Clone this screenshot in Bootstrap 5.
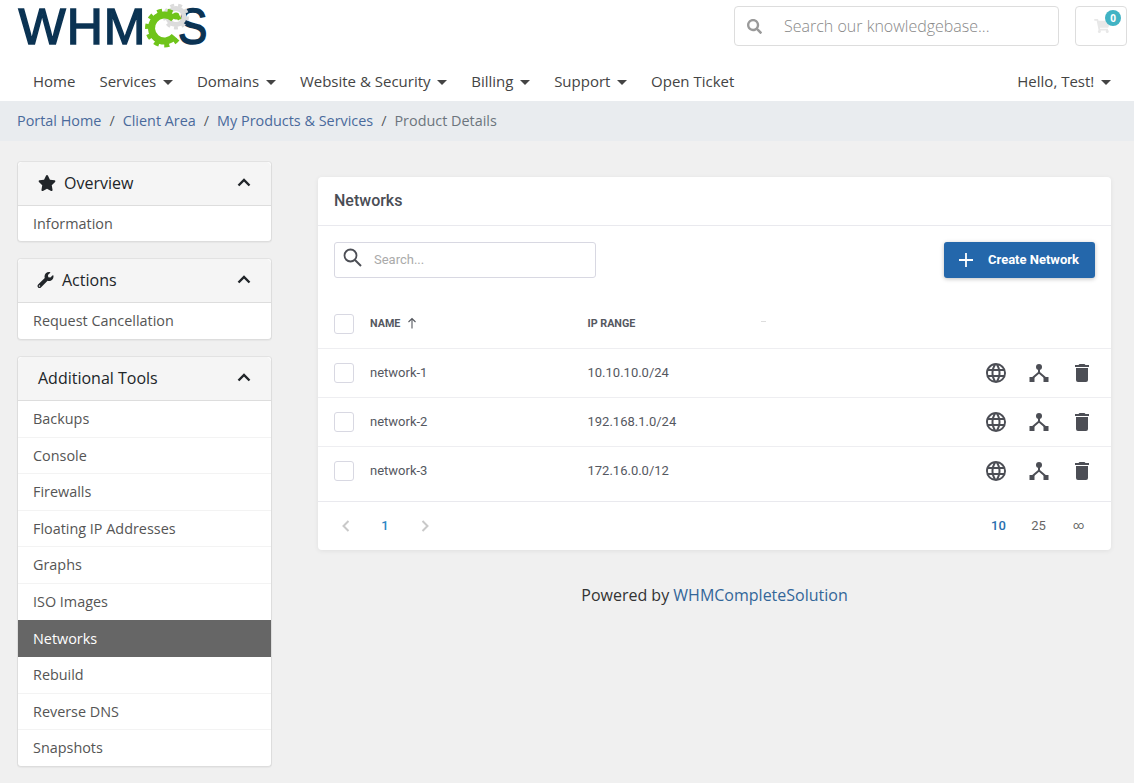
<!doctype html>
<html lang="en">
<head>
<meta charset="utf-8">
<title>Networks</title>
<link rel="stylesheet" href="https://cdn.jsdelivr.net/npm/bootstrap@5.3.0/dist/css/bootstrap.min.css">
<style>
html,body{height:100%}
body{background:#f0f0f0;font-family:"Open Sans","Liberation Sans",sans-serif;font-size:14.4px;color:#333;overflow:hidden}
a{text-decoration:none}
.top-head{background:#fff;height:101px}
.top-bar{height:61px;padding:6px 7px 0 18.5px}
.brand-logo{position:relative;display:block;width:190px;height:40px;margin-top:-1px;color:#0b3353;font:400 50px/44px "Liberation Sans",sans-serif;-webkit-text-stroke:1.5px #0b3353;letter-spacing:1px;white-space:nowrap}
.brand-s{position:absolute;left:159px;top:0;display:inline-block;transform:scaleX(.88);transform-origin:left center}
.brand-gear{position:absolute;left:120px;top:-5px;width:72px;height:50px;overflow:visible}
.kb-search{width:325px;height:40px;border:1px solid #ddd;border-radius:4px;padding-left:12px}
.kb-search svg{width:15px;height:15px;fill:#9a9a9a;flex:none}
.kb-search input{border:0;outline:0;padding:0;margin-left:22px;flex:1;min-width:0;font:300 16px "Open Sans",sans-serif;background:transparent}
.kb-search input::placeholder{color:#888;opacity:1}
.cart-btn{position:relative;width:52px;height:40px;border:1px solid #ddd;border-radius:4px;margin-left:16px}
.cart-btn svg{position:absolute;left:18px;top:12px;width:16px;height:14px;fill:#e8e8e8}
.cart-count{position:absolute;right:5px;top:3px;width:16px;height:16px;border-radius:50%;background:#41b3c4;color:#fff;font-size:10px;font-weight:700;line-height:16px;text-align:center}
.main-nav{padding:0 11px 0 21px;height:40px}
.main-nav .nav-link{color:#444;font-size:15px;padding:0 12px;line-height:40px}
.main-nav .dropdown-toggle::after{margin-left:6.7px;vertical-align:2px;border-top-width:5px;border-left-width:5px;border-right-width:5px}
.crumbs{background:#e9ecef;height:40px;padding:0 17px;font-size:14.4px;margin:0}
.crumbs .breadcrumb-item{line-height:40px}
.crumbs a{color:#4a6a9c}
.crumbs .active{color:#6c757d}
.page-wrap{padding:19.8px 23px 0 17px}
.side-col{width:255px;flex:none}
.main-col{width:793px;flex:none;margin-left:46px;padding-top:16.2px}
.side-card{margin-bottom:16px;border-color:#ddd;border-radius:4px;border-top-color:#e2e2e2;box-shadow:0 1px 1px rgba(0,0,0,.04)}
.side-card .card-header{background:#f5f5f5;border-color:#ddd;height:44px;padding:0 20px 1px;font-size:16px;color:#212529}
.side-card .card-header svg.lead-ico{width:18px;height:16px;fill:#212529;margin-right:8px}
.side-card .card-header svg.wrench-ico{width:17px;margin-left:-1px}
.chev{width:14px;height:10px;margin-left:auto;margin-top:-2px}
.side-card .list-group-item{padding:0 15px;height:36.6px;line-height:36.8px;color:#555;border-color:#f3f3f3;font-size:14.4px}
.side-card .list-group-item:last-child{height:35.6px}
.side-card .list-group-item.active{background:#666;border-color:#666;color:#fff;font-weight:500;margin-top:-1px;height:37.6px;line-height:36px}
.net-card{border:0;border-radius:4px;box-shadow:0 1px 5px rgba(0,0,0,.07);font-family:Roboto,sans-serif;height:373px}
.net-head{height:49px;padding:0 16px;font-size:16px;font-weight:500;color:#4a4d55;border-bottom:1px solid #e9e9ee}
.net-tools{padding:16px 16px 0}
.net-search{width:262px;height:36px;border:1px solid #d8d8e2;border-radius:3px;padding-left:8px;background:#fff}
.net-search svg{width:19px;height:19px;flex:none;margin-top:-4px}
.net-search input{border:0;outline:0;margin-left:12px;font:400 13px Roboto,sans-serif;flex:1;min-width:0;padding:0}
.net-search input::placeholder{color:#aaa;opacity:1}
.create-btn{width:151px;height:36px;background:#2467ab;border:0;border-radius:3px;color:#fff;font-size:13px;font-weight:700;box-shadow:0 1px 4px rgba(0,0,0,.25);padding:0 0 0 14px}
.create-btn:hover{background:#2467ab;color:#fff}
.create-btn svg{width:16px;height:16px;margin-right:14px}
.net-table{margin:20px 0 0;table-layout:fixed;width:100%;font-size:13px;color:#55585f}
.net-table th,.net-table td{padding:0;border-bottom:1px solid #eeeef1;vertical-align:middle;color:#55585f;background:transparent}
.net-table thead th{height:51px;font-size:10.75px;font-weight:700;text-transform:uppercase;padding-top:2px}
.net-table tbody td{height:49px}
.net-table tbody td.cell-text{padding-bottom:1px}
.net-table tbody tr:last-child td{height:55px;padding-bottom:6px;border-bottom-color:#e9e9ee}
.net-table tbody tr:last-child td.cell-text{padding-bottom:7px}
.col-check{width:52px;padding-left:16px !important}
.col-name{width:217.5px}
.col-act{width:150px}
.tick-box{display:block;width:20px;height:20px;border:1px solid #d8d8e2;border-radius:3px;background:#fff}
.sort-up{width:10px;height:12px;margin-left:7px;vertical-align:-2px}
.faint-mark{display:inline-block;width:5px;height:1px;background:#ddd;margin:0 0 5px 126px}
.act-icons{gap:19px;padding-right:17px;justify-content:flex-end}
.act-icons svg{width:24px;height:24px;fill:#4c4e55}
.net-foot{height:48px;padding:0 27px 0 21px;font-size:13px;color:#666}
.pager-num{color:#2b86c5;font-weight:500;width:14px;text-align:center}
.pager-chev{width:14px;height:14px;fill:none;stroke:#c9c9c9;stroke-width:2}
.pager-gap-a{margin:0 26px 0 25px}
.per-page{gap:25.4px}
.per-page .cur{color:#2a6fae;font-weight:500}
.per-page span:last-child{font-size:11px;margin:0 0 0 1.5px}
.power-line{text-align:center;font-size:16px;color:#333;margin-top:33px;line-height:24px}
.power-line a{color:#336699}
</style>
</head>
<body>
<header class="top-head">
  <div class="top-bar d-flex align-items-start">
    <a class="brand-logo" href="#">WHM<span class="brand-s">S</span>
      <svg class="brand-gear" viewBox="0 0 72 50" aria-hidden="true">
        <circle cx="37" cy="16.5" r="8" fill="none" stroke="#dcdcdc" stroke-width="5"/>
        <circle cx="37" cy="16.5" r="11.5" fill="none" stroke="#dcdcdc" stroke-width="3" stroke-dasharray="4 4"/>
        <g fill="none" stroke="#6fc41a" transform="rotate(40 25.5 28)">
          <circle cx="25.5" cy="28" r="13" stroke-width="7" stroke-dasharray="62 20"/>
          <circle cx="25.5" cy="28" r="17.5" stroke-width="4" stroke-dasharray="5 5.4 5 5.4 5 5.4 5 5.4 5 5.4 5 5.4 5 5.4 5 5.4 5 29"/>
        </g>
        <circle cx="37" cy="16" r="3.4" fill="#6fc41a" stroke="none"/>
      </svg>
    </a>
    <form class="kb-search d-flex align-items-center ms-auto mb-0">
      <svg viewBox="0 0 512 512"><path d="M505 442.7L405.3 343c-4.5-4.5-10.6-7-17-7H372c27.6-35.3 44-79.7 44-128C416 93.1 322.9 0 208 0S0 93.1 0 208s93.1 208 208 208c48.3 0 92.7-16.4 128-44v16.3c0 6.4 2.5 12.5 7 17l99.7 99.7c9.4 9.4 24.6 9.4 33.9 0l28.3-28.3c9.4-9.4 9.4-24.6.1-34zM208 336c-70.7 0-128-57.2-128-128 0-70.7 57.2-128 128-128 70.7 0 128 57.2 128 128 0 70.7-57.2 128-128 128z"/></svg>
      <input type="text" placeholder="Search our knowledgebase...">
    </form>
    <a class="cart-btn" href="#">
      <svg viewBox="0 0 576 512"><path d="M528.12 301.319l47.273-208C578.806 78.301 567.391 64 551.99 64H159.208l-9.166-44.81C147.758 8.021 137.93 0 126.529 0H24C10.745 0 0 10.745 0 24v16c0 13.255 10.745 24 24 24h69.883l70.248 343.435C147.325 417.1 136 435.222 136 456c0 30.928 25.072 56 56 56s56-25.072 56-56c0-15.674-6.447-29.835-16.824-40h209.647C430.447 426.165 424 440.326 424 456c0 30.928 25.072 56 56 56s56-25.072 56-56c0-22.172-12.888-41.332-31.579-50.405l5.517-24.276c3.413-15.018-8.002-29.319-23.403-29.319H218.117l-6.545-32h293.145c11.206 0 20.92-7.754 23.403-18.681z"/></svg>
      <span class="cart-count">0</span>
    </a>
  </div>
  <nav class="main-nav d-flex">
    <ul class="nav">
      <li class="nav-item"><a class="nav-link" href="#">Home</a></li>
      <li class="nav-item"><a class="nav-link dropdown-toggle" href="#">Services</a></li>
      <li class="nav-item"><a class="nav-link dropdown-toggle" href="#">Domains</a></li>
      <li class="nav-item"><a class="nav-link dropdown-toggle" href="#">Website &amp; Security</a></li>
      <li class="nav-item"><a class="nav-link dropdown-toggle" href="#">Billing</a></li>
      <li class="nav-item"><a class="nav-link dropdown-toggle" href="#">Support</a></li>
      <li class="nav-item"><a class="nav-link" href="#">Open Ticket</a></li>
    </ul>
    <ul class="nav ms-auto">
      <li class="nav-item"><a class="nav-link dropdown-toggle" href="#">Hello, Test!</a></li>
    </ul>
  </nav>
</header>
<ol class="breadcrumb crumbs">
  <li class="breadcrumb-item"><a href="#">Portal Home</a></li>
  <li class="breadcrumb-item"><a href="#">Client Area</a></li>
  <li class="breadcrumb-item"><a href="#">My Products &amp; Services</a></li>
  <li class="breadcrumb-item active">Product Details</li>
</ol>
<div class="page-wrap d-flex align-items-start">
  <aside class="side-col">
    <div class="card side-card">
      <div class="card-header d-flex align-items-center">
        <svg class="lead-ico" viewBox="0 0 576 512"><path d="M259.3 17.8L194 150.2 47.9 171.5c-26.2 3.8-36.7 36.1-17.7 54.6l105.7 103-25 145.5c-4.5 26.3 23.2 46 46.4 33.7L288 439.6l130.7 68.7c23.2 12.2 50.9-7.4 46.4-33.7l-25-145.5 105.7-103c19-18.5 8.5-50.8-17.7-54.6L382 150.2 316.7 17.8c-11.7-23.6-45.6-23.9-57.4 0z"/></svg>
        Overview
        <svg class="chev" viewBox="0 0 14 10"><path d="M1.5 8.5L7 3l5.500 5.500" fill="none" stroke="#212529" stroke-width="2.400"/></svg>
      </div>
      <div class="list-group list-group-flush">
        <a class="list-group-item" href="#">Information</a>
      </div>
    </div>
    <div class="card side-card">
      <div class="card-header d-flex align-items-center">
        <svg class="lead-ico wrench-ico" viewBox="0 0 512 512"><path d="M507.73 109.1c-2.24-9.03-13.54-12.09-20.12-5.51l-74.36 74.36-67.88-11.31-11.31-67.88 74.36-74.36c6.62-6.62 3.43-17.9-5.66-20.16-47.38-11.74-99.55.91-136.58 37.93-39.64 39.64-50.55 97.1-34.05 147.2L18.74 402.76c-24.99 24.99-24.99 65.51 0 90.5 24.99 24.99 65.51 24.99 90.5 0l213.21-213.21c50.12 16.71 107.47 5.68 147.37-34.22 37.07-37.07 49.7-89.32 37.91-136.73zM64 472c-13.25 0-24-10.75-24-24 0-13.26 10.75-24 24-24s24 10.74 24 24c0 13.25-10.75 24-24 24z"/></svg>
        Actions
        <svg class="chev" viewBox="0 0 14 10"><path d="M1.5 8.5L7 3l5.500 5.500" fill="none" stroke="#212529" stroke-width="2.400"/></svg>
      </div>
      <div class="list-group list-group-flush">
        <a class="list-group-item" href="#">Request Cancellation</a>
      </div>
    </div>
    <div class="card side-card">
      <div class="card-header d-flex align-items-center">
        Additional Tools
        <svg class="chev" viewBox="0 0 14 10"><path d="M1.5 8.5L7 3l5.500 5.500" fill="none" stroke="#212529" stroke-width="2.400"/></svg>
      </div>
      <div class="list-group list-group-flush">
        <a class="list-group-item" href="#">Backups</a>
        <a class="list-group-item" href="#">Console</a>
        <a class="list-group-item" href="#">Firewalls</a>
        <a class="list-group-item" href="#">Floating IP Addresses</a>
        <a class="list-group-item" href="#">Graphs</a>
        <a class="list-group-item" href="#">ISO Images</a>
        <a class="list-group-item active" href="#">Networks</a>
        <a class="list-group-item" href="#">Rebuild</a>
        <a class="list-group-item" href="#">Reverse DNS</a>
        <a class="list-group-item" href="#">Snapshots</a>
      </div>
    </div>
  </aside>
  <main class="main-col">
    <section class="card net-card">
      <div class="net-head d-flex align-items-center">Networks</div>
      <div class="net-tools d-flex justify-content-between">
        <div class="net-search d-flex align-items-center">
          <svg viewBox="0 0 19 19"><circle cx="7.500" cy="7.500" r="6" fill="none" stroke="#4c4e55" stroke-width="1.800"/><path d="M12 12l6 6" stroke="#4c4e55" stroke-width="2"/></svg>
          <input type="text" placeholder="Search...">
        </div>
        <button class="btn create-btn d-flex align-items-center" type="button">
          <svg viewBox="0 0 16 16"><path d="M8 1v14M1 8h14" stroke="#fff" stroke-width="1.800"/></svg>
          Create Network
        </button>
      </div>
      <table class="table net-table">
        <thead>
          <tr>
            <th class="col-check"><span class="tick-box"></span></th>
            <th class="col-name">Name<svg class="sort-up" viewBox="0 0 10 12"><path d="M5 11.500V1.500M1.500 5L5 1.500 8.500 5" fill="none" stroke="#55585f" stroke-width="1.100"/></svg></th>
            <th>IP Range<span class="faint-mark"></span></th>
            <th class="col-act"></th>
          </tr>
        </thead>
        <tbody>
          <tr>
            <td class="col-check"><span class="tick-box"></span></td>
            <td class="cell-text">network-1</td>
            <td class="cell-text">10.10.10.0/24</td>
            <td><div class="act-icons d-flex">
              <svg viewBox="0 0 24 24"><path d="M16.36,14C16.44,13.34 16.5,12.68 16.5,12C16.5,11.32 16.44,10.66 16.36,10H19.74C19.9,10.64 20,11.31 20,12C20,12.69 19.9,13.36 19.74,14M14.59,19.56C15.19,18.45 15.65,17.25 15.97,16H18.92C17.96,17.65 16.43,18.93 14.59,19.56M14.34,14H9.66C9.56,13.34 9.5,12.68 9.5,12C9.5,11.32 9.56,10.65 9.66,10H14.34C14.43,10.65 14.5,11.32 14.5,12C14.5,12.68 14.43,13.34 14.34,14M12,19.96C11.17,18.76 10.5,17.43 10.09,16H13.91C13.5,17.43 12.83,18.76 12,19.96M8,8H5.08C6.03,6.34 7.57,5.06 9.4,4.44C8.8,5.55 8.35,6.75 8,8M5.08,16H8C8.35,17.25 8.8,18.45 9.4,19.56C7.57,18.93 6.03,17.65 5.08,16M4.26,14C4.1,13.36 4,12.69 4,12C4,11.31 4.1,10.64 4.26,10H7.64C7.56,10.66 7.5,11.32 7.5,12C7.5,12.68 7.56,13.34 7.64,14M12,4.03C12.83,5.23 13.5,6.57 13.91,8H10.09C10.5,6.57 11.17,5.23 12,4.03M18.92,8H15.97C15.65,6.75 15.19,5.55 14.59,4.44C16.43,5.07 17.96,6.34 18.92,8M12,2C6.47,2 2,6.5 2,12A10,10 0 0,0 12,22A10,10 0 0,0 22,12A10,10 0 0,0 12,2Z"/></svg>
              <svg viewBox="0 0 24 24"><circle cx="12" cy="6" r="3"/><path d="M2.500 16h5v5h-5zM16.500 16h5v5h-5z"/><path d="M12 7v5M12 11.500L5 17.500M12 11.500L19 17.500" fill="none" stroke="#4c4e55" stroke-width="2"/></svg>
              <svg viewBox="0 0 24 24"><path d="M19,4H15.5L14.5,3H9.5L8.5,4H5V6H19M6,19A2,2 0 0,0 8,21H16A2,2 0 0,0 18,19V7H6V19Z"/></svg>
            </div></td>
          </tr>
          <tr>
            <td class="col-check"><span class="tick-box"></span></td>
            <td class="cell-text">network-2</td>
            <td class="cell-text">192.168.1.0/24</td>
            <td><div class="act-icons d-flex">
              <svg viewBox="0 0 24 24"><path d="M16.36,14C16.44,13.34 16.5,12.68 16.5,12C16.5,11.32 16.44,10.66 16.36,10H19.74C19.9,10.64 20,11.31 20,12C20,12.69 19.9,13.36 19.74,14M14.59,19.56C15.19,18.45 15.65,17.25 15.97,16H18.92C17.96,17.65 16.43,18.93 14.59,19.56M14.34,14H9.66C9.56,13.34 9.5,12.68 9.5,12C9.5,11.32 9.56,10.65 9.66,10H14.34C14.43,10.65 14.5,11.32 14.5,12C14.5,12.68 14.43,13.34 14.34,14M12,19.96C11.17,18.76 10.5,17.43 10.09,16H13.91C13.5,17.43 12.83,18.76 12,19.96M8,8H5.08C6.03,6.34 7.57,5.06 9.4,4.44C8.8,5.55 8.35,6.75 8,8M5.08,16H8C8.35,17.25 8.8,18.45 9.4,19.56C7.57,18.93 6.03,17.65 5.08,16M4.26,14C4.1,13.36 4,12.69 4,12C4,11.31 4.1,10.64 4.26,10H7.64C7.56,10.66 7.5,11.32 7.5,12C7.5,12.68 7.56,13.34 7.64,14M12,4.03C12.83,5.23 13.5,6.57 13.91,8H10.09C10.5,6.57 11.17,5.23 12,4.03M18.92,8H15.97C15.65,6.75 15.19,5.55 14.59,4.44C16.43,5.07 17.96,6.34 18.92,8M12,2C6.47,2 2,6.5 2,12A10,10 0 0,0 12,22A10,10 0 0,0 22,12A10,10 0 0,0 12,2Z"/></svg>
              <svg viewBox="0 0 24 24"><circle cx="12" cy="6" r="3"/><path d="M2.500 16h5v5h-5zM16.500 16h5v5h-5z"/><path d="M12 7v5M12 11.500L5 17.500M12 11.500L19 17.500" fill="none" stroke="#4c4e55" stroke-width="2"/></svg>
              <svg viewBox="0 0 24 24"><path d="M19,4H15.5L14.5,3H9.5L8.5,4H5V6H19M6,19A2,2 0 0,0 8,21H16A2,2 0 0,0 18,19V7H6V19Z"/></svg>
            </div></td>
          </tr>
          <tr>
            <td class="col-check"><span class="tick-box"></span></td>
            <td class="cell-text">network-3</td>
            <td class="cell-text">172.16.0.0/12</td>
            <td><div class="act-icons d-flex">
              <svg viewBox="0 0 24 24"><path d="M16.36,14C16.44,13.34 16.5,12.68 16.5,12C16.5,11.32 16.44,10.66 16.36,10H19.74C19.9,10.64 20,11.31 20,12C20,12.69 19.9,13.36 19.74,14M14.59,19.56C15.19,18.45 15.65,17.25 15.97,16H18.92C17.96,17.65 16.43,18.93 14.59,19.56M14.34,14H9.66C9.56,13.34 9.5,12.68 9.5,12C9.5,11.32 9.56,10.65 9.66,10H14.34C14.43,10.65 14.5,11.32 14.5,12C14.5,12.68 14.43,13.34 14.34,14M12,19.96C11.17,18.76 10.5,17.43 10.09,16H13.91C13.5,17.43 12.83,18.76 12,19.96M8,8H5.08C6.03,6.34 7.57,5.06 9.4,4.44C8.8,5.55 8.35,6.75 8,8M5.08,16H8C8.35,17.25 8.8,18.45 9.4,19.56C7.57,18.93 6.03,17.65 5.08,16M4.26,14C4.1,13.36 4,12.69 4,12C4,11.31 4.1,10.64 4.26,10H7.64C7.56,10.66 7.5,11.32 7.5,12C7.5,12.68 7.56,13.34 7.64,14M12,4.03C12.83,5.23 13.5,6.57 13.91,8H10.09C10.5,6.57 11.17,5.23 12,4.03M18.92,8H15.97C15.65,6.75 15.19,5.55 14.59,4.44C16.43,5.07 17.96,6.34 18.92,8M12,2C6.47,2 2,6.5 2,12A10,10 0 0,0 12,22A10,10 0 0,0 22,12A10,10 0 0,0 12,2Z"/></svg>
              <svg viewBox="0 0 24 24"><circle cx="12" cy="6" r="3"/><path d="M2.500 16h5v5h-5zM16.500 16h5v5h-5z"/><path d="M12 7v5M12 11.500L5 17.500M12 11.500L19 17.500" fill="none" stroke="#4c4e55" stroke-width="2"/></svg>
              <svg viewBox="0 0 24 24"><path d="M19,4H15.5L14.5,3H9.5L8.5,4H5V6H19M6,19A2,2 0 0,0 8,21H16A2,2 0 0,0 18,19V7H6V19Z"/></svg>
            </div></td>
          </tr>
        </tbody>
      </table>
      <div class="net-foot d-flex align-items-center justify-content-between">
        <div class="d-flex align-items-center">
          <svg class="pager-chev" viewBox="0 0 14 14"><path d="M9.500 2L4.500 7l5 5"/></svg>
          <span class="pager-num pager-gap-a">1</span>
          <svg class="pager-chev" viewBox="0 0 14 14"><path d="M4.500 2l5 5-5 5"/></svg>
        </div>
        <div class="per-page d-flex align-items-center">
          <span class="cur">10</span><span>25</span><span>∞</span>
        </div>
      </div>
    </section>
    <p class="power-line">Powered by <a href="#">WHMCompleteSolution</a></p>
  </main>
</div>
<script src="https://cdn.jsdelivr.net/npm/bootstrap@5.3.0/dist/js/bootstrap.bundle.min.js"></script>
</body>
</html>
